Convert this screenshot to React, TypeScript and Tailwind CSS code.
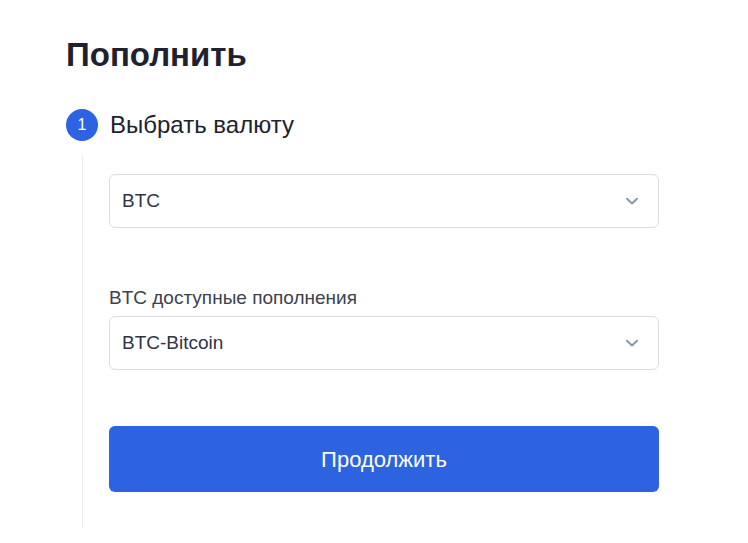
import React from "react";

const Chevron = () => (
  <svg width="14" height="14" viewBox="0 0 14 14" fill="none">
    <path d="M2 4.8 L7 9.5 L12 4.8" stroke="#8796ab" strokeWidth="2" strokeLinecap="round" strokeLinejoin="round" />
  </svg>
);

const Select = ({ value }: { value: string }) => (
  <div className="flex h-[54px] w-[550px] items-center justify-between rounded-md border border-[#dcdbe8] bg-white pl-[12px] pr-[19px]">
    <span className="text-[19px] text-[#2f3542]">{value}</span>
    <Chevron />
  </div>
);

export default function App() {
  return (
    <div className="min-h-[543px] w-full bg-white px-[66px] pt-[35px] font-['Liberation_Sans',Arial,sans-serif]">
      <h1 className="text-[33px] font-bold leading-[40px] text-[#1e2230]">Пополнить</h1>

      <div className="mt-[34px] flex items-center gap-[12px]">
        <div className="flex h-[32px] w-[32px] items-center justify-center rounded-full bg-[#2d62e0] text-[16px] text-white">
          1
        </div>
        <span className="text-[24px] leading-[32px] text-[#1e2230]">Выбрать валюту</span>
      </div>

      <div className="ml-[16px] mt-[14px] border-l border-[#ececec] pb-[36px] pl-[26px] pt-[19px]">
        <Select value="BTC" />

        <div className="mt-[58px] mb-[6px] text-[19px] leading-[24px] text-[#3d414d]">
          BTC доступные пополнения
        </div>
        <Select value="BTC-Bitcoin" />

        <button className="mt-[56px] flex h-[66px] w-[550px] items-center justify-center rounded-md bg-[#2d62e0] text-[22px] text-white">
          Продолжить
        </button>
      </div>
    </div>
  );
}
